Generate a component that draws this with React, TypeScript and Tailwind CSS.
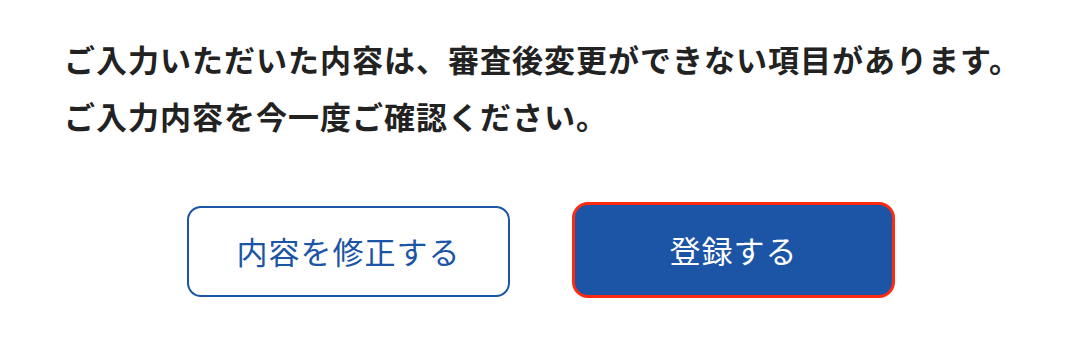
export default function App() {
  return (
    <div
      className="w-[1070px] h-[344px] bg-white pl-[64px] pt-[30px]"
      style={{ fontFamily: '"Noto Sans CJK JP", "Noto Sans", sans-serif' }}
    >
      {/* Notice */}
      <div className="text-[31px] leading-[57px] font-bold text-[#222222] tracking-[1px]">
        <p>ご入力いただいた内容は、審査後変更ができない項目があります。</p>
        <p>ご入力内容を今一度ご確認ください。</p>
      </div>

      {/* Actions */}
      <div className="flex items-start gap-[62px] mt-[58px] pl-[123px]">
        <button className="mt-[4px] w-[323px] h-[91px] rounded-[14px] border-2 border-[#1c55a6] bg-white text-[#1c55a6] text-[31px] tracking-[1px] flex items-center justify-center">
          内容を修正する
        </button>
        <button className="w-[323px] h-[96px] rounded-[16px] border-[3px] border-[#ff2a12] bg-[#1c55a6] text-white text-[31px] tracking-[1px] flex items-center justify-center">
          登録する
        </button>
      </div>
    </div>
  );
}
